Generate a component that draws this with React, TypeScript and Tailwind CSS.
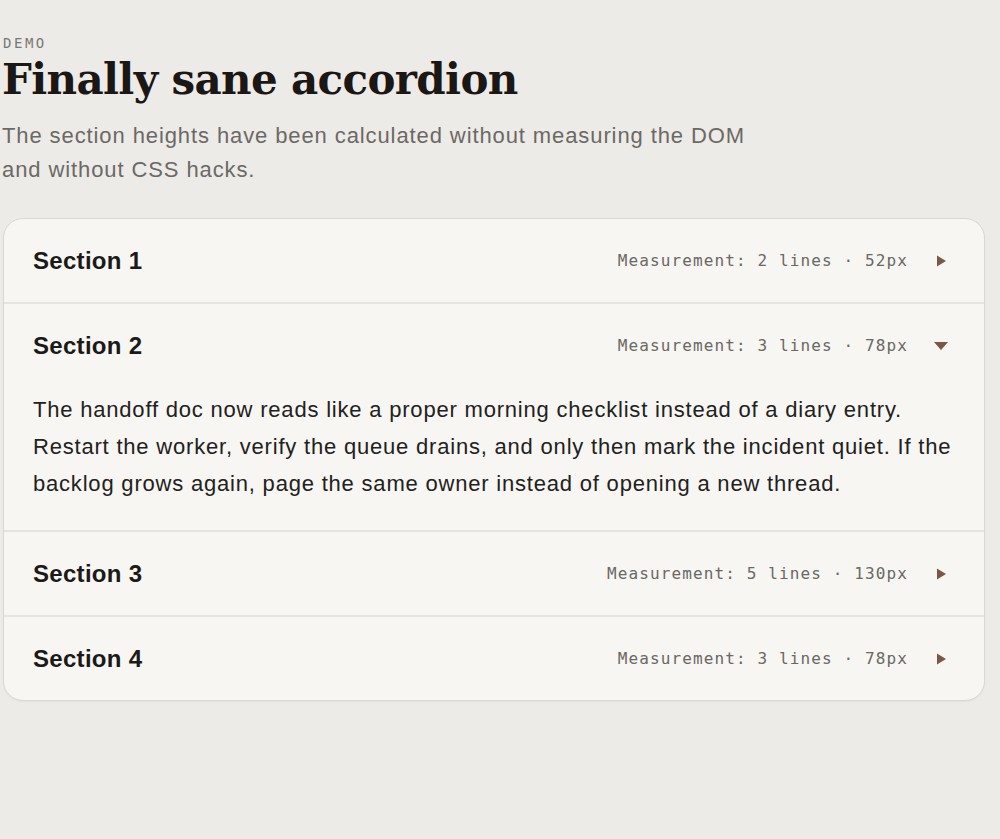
import { useState } from 'react'

type Section = {
  id: number
  title: string
  lines: number
  px: number
  body: string
}

const sections: Section[] = [
  {
    id: 1,
    title: 'Section 1',
    lines: 2,
    px: 52,
    body: 'Short note for the on-call rotation. Nothing to do here unless the alert fires twice in an hour.',
  },
  {
    id: 2,
    title: 'Section 2',
    lines: 3,
    px: 78,
    body: 'The handoff doc now reads like a proper morning checklist instead of a diary entry. Restart the worker, verify the queue drains, and only then mark the incident quiet. If the backlog grows again, page the same owner instead of opening a new thread.',
  },
  {
    id: 3,
    title: 'Section 3',
    lines: 5,
    px: 130,
    body: 'Longer section body.',
  },
  {
    id: 4,
    title: 'Section 4',
    lines: 3,
    px: 78,
    body: 'Another section body.',
  },
]

function Caret({ open }: { open: boolean }) {
  return open ? (
    <svg width="14" height="10" viewBox="0 0 14 10" className="shrink-0">
      <path d="M0 1 L14 1 L7 9 Z" fill="#7a5848" />
    </svg>
  ) : (
    <svg width="14" height="12" viewBox="0 0 14 12" className="shrink-0">
      <path d="M3 0.5 L12 6 L3 11.5 Z" fill="#7a5848" />
    </svg>
  )
}

export default function App() {
  const [open, setOpen] = useState<number | null>(2)

  return (
    <div className="min-h-screen bg-[#edebe7] pl-[3px] pt-[34px] font-['Liberation_Sans',Arial,sans-serif]">
      {/* Header */}
      <div className="text-[14px] leading-[18px] tracking-[0.18em] text-[#7a7874] font-['DejaVu_Sans_Mono',monospace]">
        DEMO
      </div>
      <h1 className="-ml-[1px] mt-[2px] text-[42px] leading-[52px] font-bold tracking-[-0.015em] text-[#1a1714] font-['DejaVu_Serif',Georgia,serif]">
        Finally sane accordion
      </h1>
      <p className="-ml-[1px] mt-[13px] w-[770px] text-[22px] leading-[34px] tracking-[0.9px] text-[#6b6965]">
        The section heights have been calculated without measuring the DOM and without CSS hacks.
      </p>

      {/* Accordion */}
      <div className="mt-[31px] w-[982px] overflow-hidden rounded-[20px] border border-[#dad8d3] bg-[#f7f6f2] shadow-[0_1px_2px_rgba(0,0,0,0.04)]">
        {sections.map((s, i) => {
          const isOpen = open === s.id
          return (
            <div key={s.id} className={i > 0 ? 'border-t-2 border-[#e6e4df]' : ''}>
              <button
                onClick={() => setOpen(isOpen ? null : s.id)}
                className="flex h-[83px] w-full items-center justify-between pl-[29px] pr-[36px] text-left"
              >
                <span className="text-[24px] font-bold tracking-[0.3px] text-[#1c1a18]">{s.title}</span>
                <span className="flex items-center gap-[26px]">
                  <span className="text-[16px] tracking-[0.07em] text-[#6a6864] font-['DejaVu_Sans_Mono',monospace]">
                    Measurement: {s.lines} lines · {s.px}px
                  </span>
                  <Caret open={isOpen} />
                </span>
              </button>
              {isOpen && (
                <div className="pl-[29px] pr-[28px] pb-[28px] mt-[4px] text-[22px] leading-[37px] tracking-[0.8px] text-[#222120]">
                  {s.body}
                </div>
              )}
            </div>
          )
        })}
      </div>
    </div>
  )
}
